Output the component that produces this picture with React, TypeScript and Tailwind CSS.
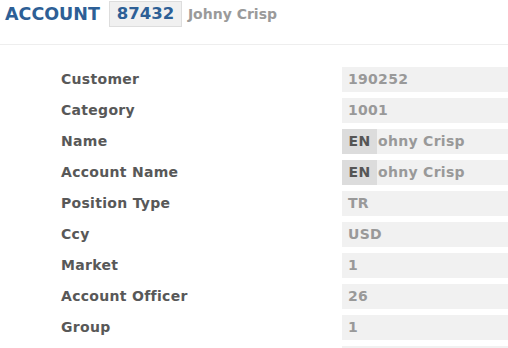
import React from "react";

const rows: { label: string; value: string; prefix?: string }[] = [
  { label: "Customer", value: "190252" },
  { label: "Category", value: "1001" },
  { label: "Name", value: "ohny Crisp", prefix: "EN" },
  { label: "Account Name", value: "ohny Crisp", prefix: "EN" },
  { label: "Position Type", value: "TR" },
  { label: "Ccy", value: "USD" },
  { label: "Market", value: "1" },
  { label: "Account Officer", value: "26" },
  { label: "Group", value: "1" },
  { label: "", value: "" },
];

export default function App() {
  return (
    <div
      className="w-[508px] h-[348px] overflow-hidden bg-white"
      style={{ fontFamily: '"DejaVu Sans", sans-serif' }}
    >
      <div className="h-[45px] border-b border-[#eeeeee] flex items-start pl-[5px] pt-[1px]">
        <div className="flex items-center h-[26px]">
          <span className="text-[17.5px] font-bold text-[#2d5f96]">ACCOUNT</span>
          <div className="ml-[9px] h-[26px] w-[73px] flex items-center justify-center bg-[#f0f0f0] border border-[#dddddd]">
            <span className="text-[16.5px] font-bold text-[#2d5f96]">87432</span>
          </div>
          <span className="ml-[6px] text-[14px] font-bold text-[#9a9a9a]">Johny Crisp</span>
        </div>
      </div>
      <div className="pt-[22px] flex flex-col gap-[6px]">
        {rows.map((r, i) => (
          <div key={i} className="flex items-center h-[25px]">
            <div className="w-[342px] pl-[61px] text-[14px] font-bold text-[#585858] tracking-[0.3px]">{r.label}</div>
            <div className="flex-1 h-[25px] bg-[#f1f1f1] flex items-center text-[14px] font-bold text-[#999999] tracking-[0.3px]">
              {r.prefix ? (
                <>
                  <span className="h-[25px] w-[35px] bg-[#dcdcdc] flex items-center justify-center text-[#555555]">
                    {r.prefix}
                  </span>
                  <span className="ml-[1px]">{r.value}</span>
                </>
              ) : (
                <span className="pl-[6px]">{r.value}</span>
              )}
            </div>
          </div>
        ))}
      </div>
    </div>
  );
}
